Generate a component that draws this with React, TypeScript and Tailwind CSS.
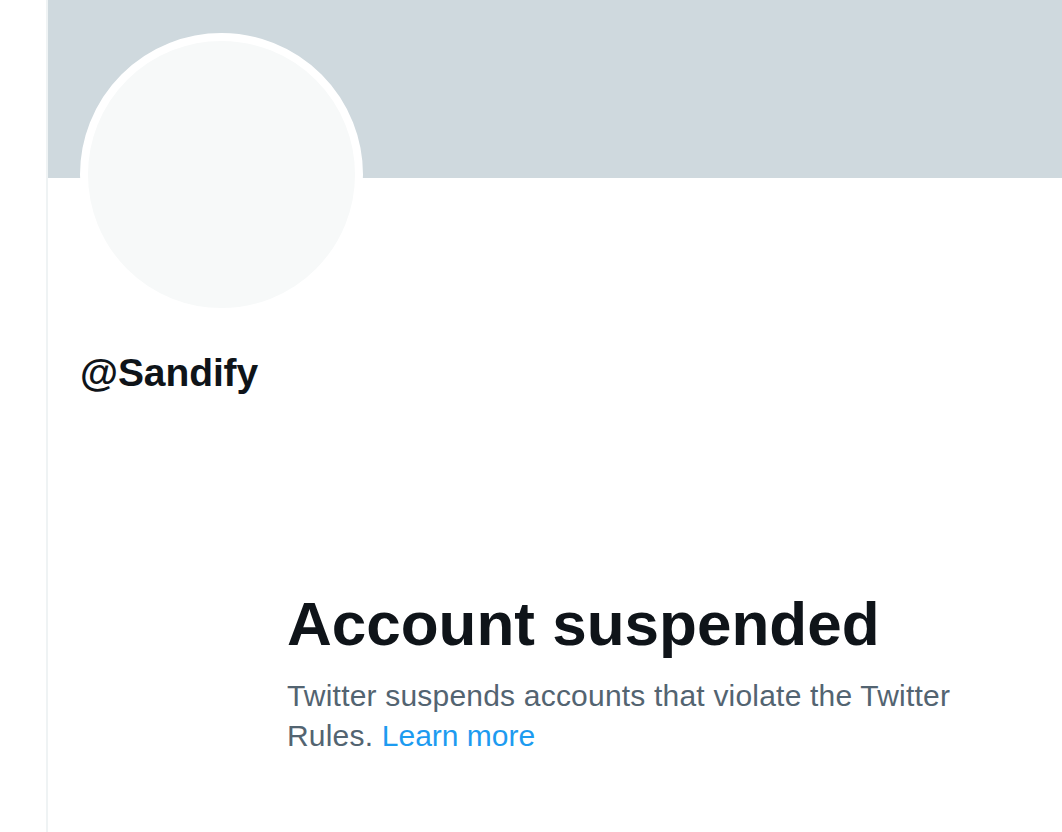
export default function App() {
  return (
    <div className="flex min-h-[832px] w-full bg-white" style={{ fontFamily: '"Liberation Sans", Arial, sans-serif' }}>
      {/* Left rail */}
      <div className="w-[46px] shrink-0" />

      {/* Profile column */}
      <main className="flex flex-1 flex-col border-l-2 border-[#eff3f4]">
        <div className="h-[178px] w-full bg-[#cfd9de]" />

        <div className="px-8">
          <div className="-mt-[145px] h-[283px] w-[283px] rounded-full border-[8px] border-white bg-[#f7f9f9]" />

          <div className="mt-[33px] text-[39px] font-bold leading-[48px] tracking-[-0.1px] text-[#0f1419]">
            @Sandify
          </div>
        </div>

        <section className="mt-[191px] pl-[239px]">
          <h1 className="text-[62px] font-bold leading-[72px] text-[#0f1419]">Account suspended</h1>
          <p className="mt-[16px] w-[700px] text-[30px] leading-[40px] tracking-[0.2px] text-[#536471]">
            Twitter suspends accounts that violate the Twitter Rules.{' '}
            <span className="tracking-normal text-[#1d9bf0]">Learn more</span>
          </p>
        </section>
      </main>
    </div>
  );
}
